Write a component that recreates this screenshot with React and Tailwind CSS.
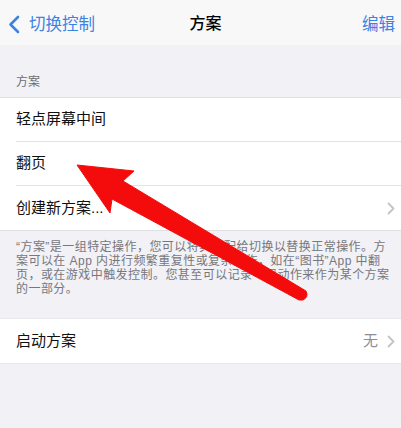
import React from 'react';

const FONT = { fontFamily: '"Liberation Sans", "Noto Sans CJK SC", sans-serif' };

function Chevron() {
  return (
    <svg width="8" height="13" viewBox="0 0 8 13" className="shrink-0">
      <path d="M1.5 1.5 L6.5 6.5 L1.5 11.5" fill="none" stroke="#c4c4c8" strokeWidth="1.8" strokeLinecap="round" strokeLinejoin="round" />
    </svg>
  );
}

function Row({ label, value, chevron, last }) {
  return (
    <div className="pl-4 bg-white">
      <div className={`h-[44px] flex items-center pr-[6px] ${last ? '' : 'border-b border-[#e3e3e6]'}`}>
        <span className="text-[15px] text-[#111] flex-1">{label}</span>
        {value && <span className="text-[15px] text-[#8e8e93] mr-[9px]">{value}</span>}
        {chevron && <Chevron />}
      </div>
    </div>
  );
}

const FOOTER_LINES = [
  '“方案”是一组特定操作，您可以将其分配给切换以替换正常操作。方',
  '案可以在 App 内进行频繁重复性或复杂操作，如在“图书”App 中翻',
  '页，或在游戏中触发控制。您甚至可以记录一组动作来作为某个方案',
  '的一部分。',
];

export default function App() {
  return (
    <div className="w-[401px] h-[428px] bg-[#f1f1f6] relative overflow-hidden" style={FONT}>
      {/* 导航栏 */}
      <div className="h-[45px] bg-[#f8f8f8] flex items-center pt-[3px] pl-[8px] pr-[6px]">
        <div className="flex items-center flex-1 text-[#3a82e4]">
          <svg width="12" height="19" viewBox="0 0 12 19">
            <path d="M10 2 L2.5 9.5 L10 17" fill="none" stroke="#3a82e4" strokeWidth="2.6" strokeLinecap="round" strokeLinejoin="round" />
          </svg>
          <span className="ml-[9px] text-[16.5px]">切换控制</span>
        </div>
        <span className="text-[16px] font-medium text-black absolute left-1/2 -translate-x-[11px]">方案</span>
        <span className="text-[16.5px] text-[#3a82e4]">编辑</span>
      </div>

      {/* 分组标题 */}
      <div className="h-[52px] flex items-end px-4 pb-[6px] text-[12px] text-[#6d6d72]">方案</div>

      <div className="border-t border-b border-[#e0e0e3]">
        <Row label="轻点屏幕中间" />
        <Row label="翻页" />
        <Row label="创建新方案..." chevron last />
      </div>

      {/* 说明文字 */}
      <div className="pt-[9px] px-4 text-[12px] leading-[14px] tracking-[0.45px] text-[#77777c]">
        {FOOTER_LINES.map(line => (
          <div key={line} className="whitespace-nowrap">{line}</div>
        ))}
      </div>

      <div className="mt-[22px] border-t border-b border-[#e8e8eb]">
        <Row label="启动方案" value="无" chevron last />
      </div>

      {/* 红色箭头 */}
      <svg className="absolute left-0 top-0 pointer-events-none" width="401" height="428" viewBox="0 0 401 428">
        <path
          d="M77 165 L134 171 L123 181 L306 291 Q309 297 303 300 L299 300 L112 199 L110 213 Z"
          fill="#f40c0c"
          stroke="#f40c0c"
          strokeWidth="1"
          strokeLinejoin="round"
        />
      </svg>
    </div>
  );
}
